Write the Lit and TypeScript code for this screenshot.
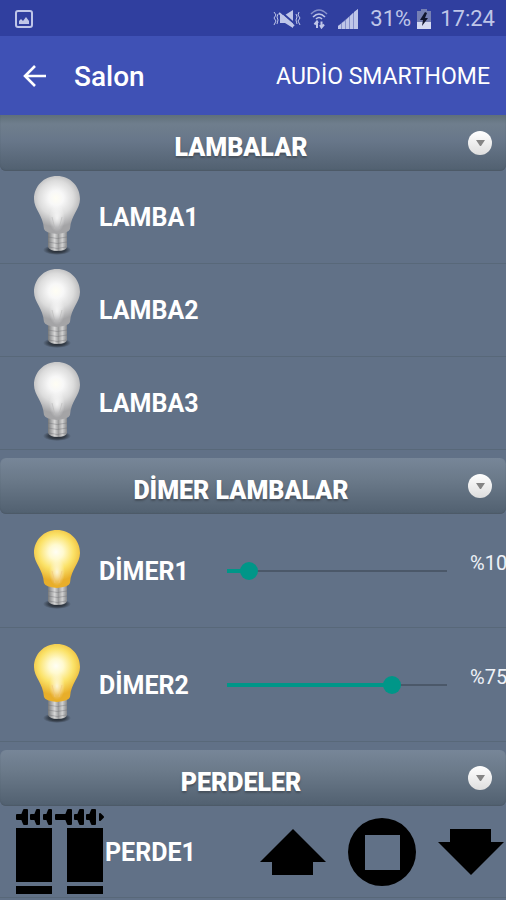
import { LitElement, html, css, svg } from "lit";
import { customElement, property, state } from "lit/decorators.js";

@customElement("lamp-bulb")
class LampBulb extends LitElement {
  @property({ type: Boolean }) lit = false;

  static styles = css`
    :host { display: block; width: 48px; height: 80px; }
    svg { display: block; width: 100%; height: 100%; }
    .off-mid { stop-color: #dcdcdc; }
    .off-edge { stop-color: #a4a4a6; }
    .on-mid { stop-color: #fbe268; }
    .on-edge { stop-color: #e8ae2a; }
  `;

  render() {
    const k = this.lit ? "on" : "off";
    return html`<svg viewBox="0 0 48 80" aria-hidden="true">
      <defs>
        <radialGradient id="glass" cx="23" cy="23" r="29" gradientUnits="userSpaceOnUse">
          <stop offset="0" stop-color="#fffef4" />
          <stop offset="0.25" stop-color=${this.lit ? "#fffad0" : "#f8f8f8"} />
          <stop offset="0.6" class="${k}-mid" />
          <stop offset="1" class="${k}-edge" />
        </radialGradient>
        <linearGradient id="cap">
          <stop offset="0" stop-color="#77797b" />
          <stop offset="0.35" stop-color="#d8d8d8" />
          <stop offset="0.55" stop-color="#9b9c9d" />
          <stop offset="0.75" stop-color="#d2d2d2" />
          <stop offset="1" stop-color="#85878a" />
        </linearGradient>
        <radialGradient id="shade">
          <stop offset="0" stop-color="#1d2229" />
          <stop offset="0.6" stop-color="#2b323b" stop-opacity="0.8" />
          <stop offset="1" stop-color="#2b323b" stop-opacity="0" />
        </radialGradient>
        <radialGradient id="glow">
          <stop offset="0" stop-color="#fff" stop-opacity="0.75" />
          <stop offset="1" stop-color="#fff" stop-opacity="0" />
        </radialGradient>
      </defs>
      <ellipse cx="24" cy="75" rx="14" ry="5" fill="url(#shade)" />
      <path d="M15 57H34V72Q33 76 24 76Q17 76 15 72Z" fill="url(#cap)" />
      <path d="M15 62q9 3 19 0M15 67q9 3 19 0M16 72q8 3 17 0" fill="none" stroke="#6d6f72" stroke-width="1" opacity="0.4" />
      <path d="M24 1C11 1 1 11 1 24C1 34 10 40 11 54Q12 58 24 59Q36 58 37 54C38 40 47 34 47 24C47 11 37 1 24 1Z" fill="url(#glass)" />
      <ellipse cx="24" cy="43" rx="8" ry="14" fill="url(#glow)" />
      <path d="M19 42l3 12M29 42l-3 12" fill="none" stroke=${this.lit ? "#f2c47a" : "#b9b9b9"} stroke-width="1" opacity="0.6" />
    </svg>`;
  }
}

const curtainIcon = svg`
  <path d="M0 19H36V73H0ZM51 19H87V73H51ZM0 77H36V85H0ZM51 77H87V85H51Z" />
  <path d="M1 6H6L8 1H11V15H8L6 10H1ZM15 6H19L21 1H23V15H21L19 10H15ZM28 6H31L33 1H35V15H33L31 10H28ZM40 6H50L52 1H55V15H52L50 10H40ZM59 6H62L64 1H67V15H64L62 10H59ZM71 6H74L76 1H79V15H76L74 10H71ZM84 5L87 8L84 11Z" stroke="#000" stroke-width="2" stroke-linejoin="round" />`;

@customElement("app-root")
class AppRoot extends LitElement {
  @state() private lamps = ["LAMBA1", "LAMBA2", "LAMBA3"];
  @state() private dimmers = [
    { name: "DİMER1", level: 10 },
    { name: "DİMER2", level: 75 },
  ];
  @state() private curtains = ["PERDE1"];

  static styles = css`
    :host {
      display: block;
      min-height: 100vh;
      overflow: hidden;
      background: #617187;
      color: #fff;
      font-family: Roboto, "Noto Sans", sans-serif;
    }
    * { box-sizing: border-box; }
    button { padding: 0; border: 0; background: none; cursor: pointer; display: block; }
    svg { display: block; }

    .status {
      display: flex;
      align-items: center;
      height: 36px;
      padding: 2px 11px 0 14px;
      background: #303f9f;
      color: #bfc6e8;
      font-size: 22px;
      line-height: 28px;
    }
    .status .spacer { flex: 1; }
    .status .sound { margin-right: 9px; }
    .status .wifi { margin-right: 10px; }
    .status .signal { margin-right: 12px; }
    .status .battery { margin: 0 9px 0 6px; }

    .bar {
      display: flex;
      align-items: center;
      height: 79px;
      padding: 2px 16px 0 20px;
      background: #3f51b5;
    }
    .bar h1 { flex: 1; margin: 0 0 0 26px; font-size: 28px; line-height: 36px; font-weight: 500; }
    .bar a { color: #fff; text-decoration: none; font-size: 23px; line-height: 32px; }

    section + section { margin-top: 8px; }
    .head {
      display: flex;
      align-items: center;
      height: 56px;
      padding-right: 14px;
      border-radius: 6px;
      background: linear-gradient(#778698, #6a7989 40%, #516070);
      box-shadow: inset 0 -1px 1px #4d5a68;
    }
    .head.first { border-radius: 0 0 6px 6px; background: linear-gradient(#5f6f7a, #6f7e8d 16%, #68778a 45%, #516070); }
    .head h2 {
      flex: 1;
      margin: 0;
      padding: 10px 0 0 14px;
      text-align: center;
      font-size: 25px;
      line-height: 32px;
      font-weight: 900;
      text-shadow: 0 2px 2px #46505c;
    }

    .row { display: flex; align-items: center; border-bottom: 1px solid #586879; }
    .lamp { height: 93px; padding-left: 33px; }
    .dimmer { height: 114px; padding-left: 33px; }
    lamp-bulb { margin-bottom: 4px; }
    .name { font-size: 25px; line-height: 32px; font-weight: 700; }
    .lamp .name, .dimmer .name { margin-left: 18px; padding-top: 2px; }
    .dimmer .name { width: 119px; }

    .slider {
      -webkit-appearance: none;
      appearance: none;
      flex: 1;
      min-width: 0;
      height: 32px;
      margin: 0 14px 0 0;
      background: none;
    }
    .slider::-webkit-slider-runnable-track {
      height: 18px;
      background:
        linear-gradient(#009688, #009688) 9px 50% / calc((100% - 18px) * var(--level)) 4px no-repeat,
        linear-gradient(#4b5869, #4b5869) 9px 50% / calc(100% - 18px) 2px no-repeat;
    }
    .slider::-webkit-slider-thumb {
      -webkit-appearance: none;
      width: 18px;
      height: 18px;
      border-radius: 50%;
      background: #009688;
    }
    .level { width: 36px; padding-bottom: 16px; font-size: 20px; line-height: 24px; white-space: nowrap; color: #eef2f8; }

    .curtain { height: 92px; padding: 0 2px 0 16px; }
    .curtain .name { flex: 1; margin-left: 1px; padding-top: 2px; }
    .controls { display: flex; align-items: center; gap: 22px; }
  `;

  private setLevel(i: number, e: Event) {
    const level = Number((e.target as HTMLInputElement).value);
    this.dimmers = this.dimmers.map((d, j) => (i === j ? { ...d, level } : d));
  }

  private head(title: string, first = false) {
    return html`<div class="head ${first ? "first" : ""}">
      <h2>${title}</h2>
      <button aria-label="${title}">
        <svg width="24" height="24" viewBox="0 0 24 24">
          <defs>
            <linearGradient id="knob" x2="0" y2="1">
              <stop offset="0" stop-color="#fff" />
              <stop offset="1" stop-color="#dedede" />
            </linearGradient>
          </defs>
          <circle cx="12" cy="12" r="12" fill="url(#knob)" />
          <path d="M8 9H17L13 15H12Z" fill="#858585" />
        </svg>
      </button>
    </div>`;
  }

  render() {
    return html`
      <div class="status">
        <svg width="20" height="20" viewBox="0 0 20 20">
          <rect x="2" y="2" width="16" height="16" rx="2" fill="none" stroke="#bfc6e8" stroke-width="2" />
          <path d="M5 15V12L7 10L9 12L12 8L15 12V15Z" fill="#bfc6e8" />
        </svg>
        <span class="spacer"></span>
        <svg class="sound" width="28" height="20" viewBox="0 0 28 20" fill="none" stroke="#bfc6e8">
          <path d="M7 6H12L20 1V19L12 14H7Z" fill="#bfc6e8" stroke="none" />
          <path d="M7 2L22 15" stroke="#303f9f" stroke-width="2" />
          <path d="M6 4L21 17" stroke-width="2" />
          <path d="M1 3l2 3-2 3 2 3-2 4M5 5l-1 3 1 3-1 4M23 5l1 3-1 3 1 4M26 3l-1 3 2 3-2 3 2 4" />
        </svg>
        <svg class="wifi" width="18" height="20" viewBox="0 0 18 20" fill="none" stroke="#bfc6e8" stroke-width="1.6">
          <path d="M1 5Q9-3 17 5" opacity="0.6" />
          <path d="M3 8Q9 2 15 8M6 10Q9 7 12 10" />
          <path d="M7 19V13M4.500 15.500L7 12.500L8 14M11.500 12.500V18M10 16L11.500 18.500L14 15.500" stroke-width="2" />
        </svg>
        <svg class="signal" width="20" height="20" viewBox="0 0 20 20" fill="#bfc6e8">
          <path d="M0 20V17L20 0V20Z" opacity="0.6" />
          <path d="M0 20V17L3 15V20ZM4 20V14L7 12V20ZM8 20V11L11 8V20ZM12 20V7L15 4V20ZM16 20V3L20 0V20Z" />
        </svg>
        <span>31%</span>
        <svg class="battery" width="14" height="20" viewBox="0 0 14 20">
          <path d="M4 0H10V2H14V20H0V2H4Z" fill="#7680b4" />
          <path d="M0 13H14V20H0Z" fill="#d5daf2" />
          <path d="M8 3L3 11H6L5 17L11 9H8L10 4Z" fill="#10142c" />
        </svg>
        <span>17:24</span>
      </div>

      <header class="bar">
        <button aria-label="Geri">
          <svg width="28" height="28" viewBox="0 0 28 28" fill="none" stroke="#fff" stroke-width="2.600">
            <path d="M15 3L5 13L15 23M5 13H26" />
          </svg>
        </button>
        <h1>Salon</h1>
        <a href="#">AUDİO SMARTHOME</a>
      </header>

      <section>
        ${this.head("LAMBALAR", true)}
        ${this.lamps.map((n) => html`<div class="row lamp"><lamp-bulb></lamp-bulb><span class="name">${n}</span></div>`)}
      </section>

      <section>
        ${this.head("DİMER LAMBALAR")}
        ${this.dimmers.map(
          (d, i) => html`<div class="row dimmer">
            <lamp-bulb lit></lamp-bulb>
            <label class="name" for="dimmer-${i}">${d.name}</label>
            <input class="slider" id="dimmer-${i}" type="range" min="0" max="100" .value=${String(d.level)}
              style="--level: ${d.level / 100}" @input=${(e: Event) => this.setLevel(i, e)} />
            <output class="level" for="dimmer-${i}">%${d.level}</output>
          </div>`
        )}
      </section>

      <section>
        ${this.head("PERDELER")}
        ${this.curtains.map(
          (n) => html`<div class="row curtain">
            <svg width="88" height="86" viewBox="0 0 88 86">${curtainIcon}</svg>
            <span class="name">${n}</span>
            <div class="controls">
              <button aria-label="Yukarı">
                <svg width="66" height="46" viewBox="0 0 66 46"><path d="M33 0L66 33H53V46H12V33H0Z" /></svg>
              </button>
              <button aria-label="Dur">
                <svg width="68" height="68" viewBox="0 0 68 68"><path fill-rule="evenodd" d="M34 0A34 34 0 0 1 34 68A34 34 0 0 1 34 0ZM17 17V52H52V17Z" /></svg>
              </button>
              <button aria-label="Aşağı">
                <svg width="66" height="46" viewBox="0 0 66 46"><path d="M33 46L0 13H12V0H53V13H66Z" /></svg>
              </button>
            </div>
          </div>`
        )}
      </section>
    `;
  }
}
